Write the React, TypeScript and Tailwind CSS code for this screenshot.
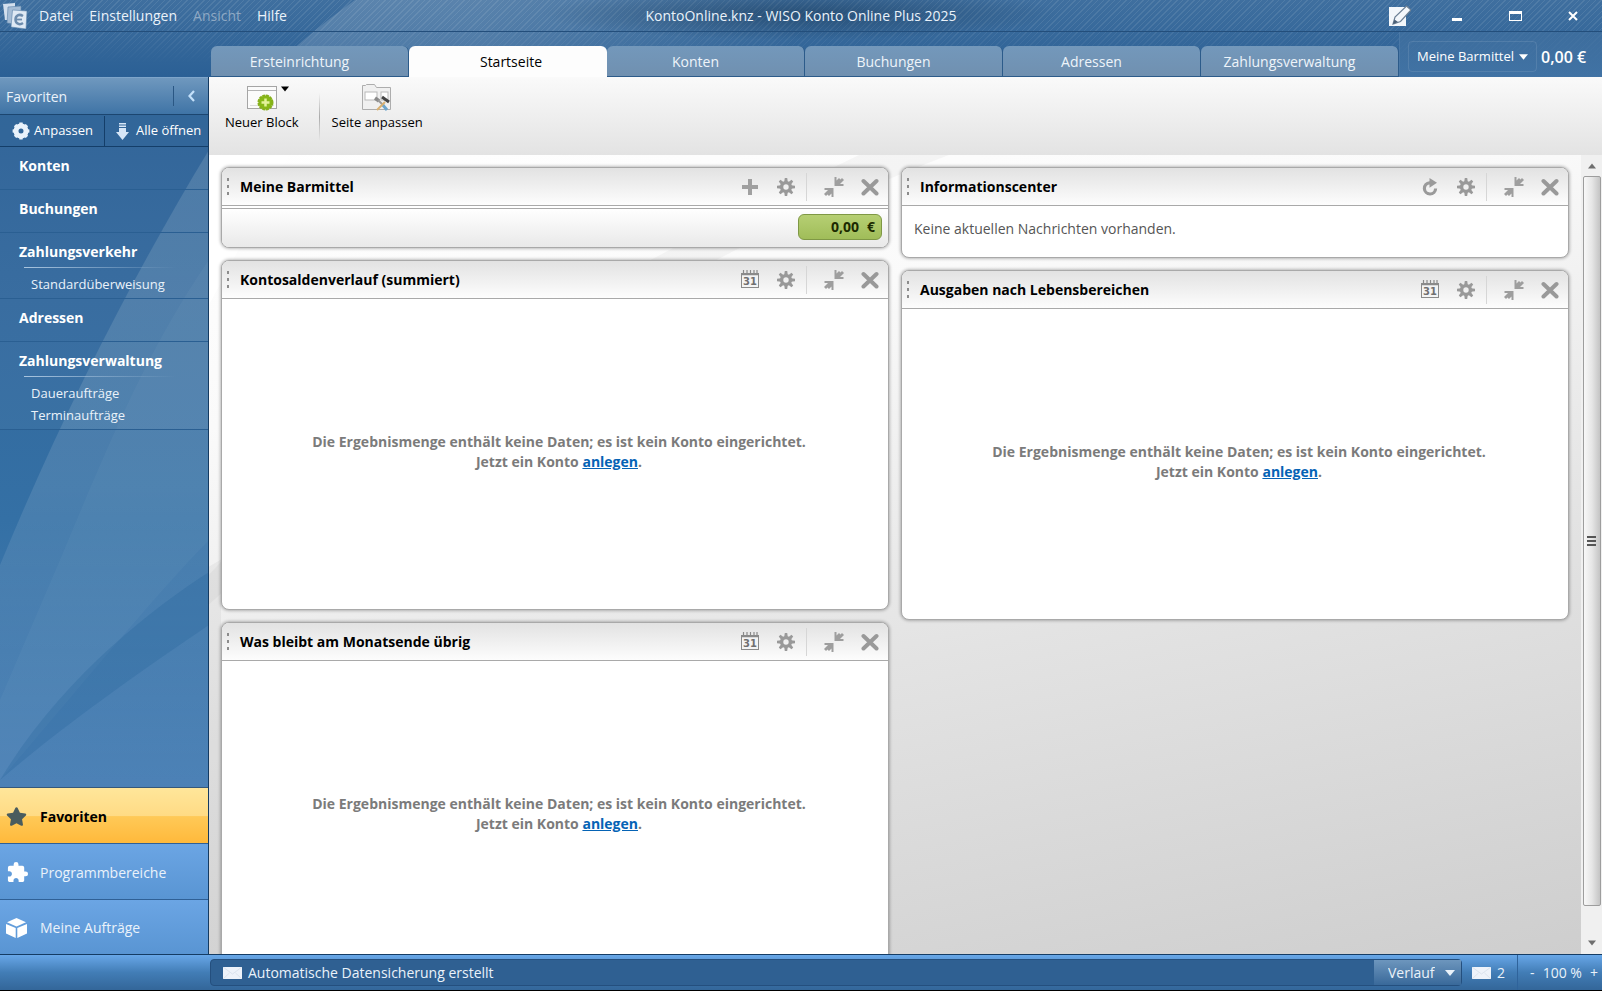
import React from 'react';
import { FaStar } from 'react-icons/fa';
import { MdExtension } from 'react-icons/md';

interface NavGroup {
  title: string;
  items?: string[];
}

const TABS = ['Ersteinrichtung', 'Startseite', 'Konten', 'Buchungen', 'Adressen', 'Zahlungsverwaltung'];
const ACTIVE_TAB = 'Startseite';

const NAV: NavGroup[] = [
  { title: 'Konten' },
  { title: 'Buchungen' },
  { title: 'Zahlungsverkehr', items: ['Standardüberweisung'] },
  { title: 'Adressen' },
  { title: 'Zahlungsverwaltung', items: ['Daueraufträge', 'Terminaufträge'] },
];

const TEETH = [0, 45, 90, 135, 180, 225, 270, 315];

/* ---------- Icons ---------- */

const GearIcon: React.FC<{ className?: string }> = ({ className = '' }) => (
  <svg className={className} width="18" height="18" viewBox="0 0 18 18" fill="none">
    <circle cx="9" cy="9" r="4.4" stroke="currentColor" strokeWidth="3.4" />
    {TEETH.map((a) => (
      <path key={a} d="M7.200 4 L7.800 0 H10.200 L10.800 4 Z" fill="currentColor" transform={`rotate(${a} 9 9)`} />
    ))}
  </svg>
);

const SolidGearIcon = () => (
  <svg width="18" height="18" viewBox="0 0 18 18" fill="none">
    <circle cx="9" cy="9" r="5" stroke="#e9f2fb" strokeWidth="5" />
    {TEETH.map((a) => (
      <path key={a} d="M7 3 L7.4 0.6 H10.6 L11 3 Z" fill="#e9f2fb" transform={`rotate(${a} 9 9)`} />
    ))}
  </svg>
);

const PlusIcon = () => (
  <svg width="18" height="18" viewBox="0 0 18 18">
    <path d="M7 1h4v6h6v4h-6v6H7v-6H1V7h6z" fill="#a0a0a0" />
  </svg>
);

const RefreshIcon = () => (
  <svg width="18" height="18" viewBox="0 0 18 18" fill="none">
    <path d="M10 4.800H8.600a5.600 5.600 0 1 0 6 5.700" stroke="#9a9a9a" strokeWidth="3.200" />
    <path d="M8.500 0l7.500 4.800-7.500 5z" fill="#9a9a9a" />
  </svg>
);

const CalendarIcon = () => (
  <svg width="20" height="20" viewBox="0 0 20 20" fill="none">
    <rect x="1.5" y="3.5" width="17" height="14" fill="#f4f4f4" stroke="#8a8a8a" />
    <path d="M1 4.500h18" stroke="#8a8a8a" strokeWidth="1.500" />
    <path d="M3.5 0v4M7 0v4M10.5 0v4M14 0v4M17 0v4" stroke="#8a8a8a" strokeWidth="1.2" />
    <text x="10" y="15" textAnchor="middle" fontSize="10" fontWeight="700" fontFamily="DejaVu Sans, sans-serif" fill="#707070">31</text>
  </svg>
);

const CollapseIcon = () => (
  <svg width="20" height="20" viewBox="0 0 20 20" fill="#9e9e9e">
    <path d="M10.500 0v9h9V7h-3.500l4-4L18 1l-1.500 1.500L15 1l-2.500 2.500V0z" />
    <path d="M9.500 20v-9h-9v2H4l-4 4L2 19l1.500-1.500L5 19l2.500-2.500V20z" />
  </svg>
);

const CloseIcon = () => (
  <svg width="18" height="18" viewBox="0 0 18 18" fill="none">
    <path d="M2.500 3l13 12.500M15.500 3l-13 12.500" stroke="#999" strokeWidth="4" strokeLinecap="round" />
  </svg>
);

const EnvelopeIcon = () => (
  <svg width="19" height="12" viewBox="0 0 19 12" fill="none">
    <rect width="19" height="12" fill="#eef3fa" />
    <path d="M0 0l9.500 7L19 0M0 12l6.500-6M19 12l-6.500-6" stroke="#d3dce8" strokeWidth="0.700" />
  </svg>
);

const LogoIcon = () => (
  <svg width="26" height="26" viewBox="0 0 26 26" fill="none">
    <path d="M1 1l12-1v17H3z" fill="#d3dfed" />
    <path d="M6 4l13-1v19L5 20z" fill="#a5bcd5" stroke="#5d83aa" strokeWidth="0.600" />
    <path d="M10.500 7L25 8l-1 18-15-2z" fill="#dfe9f4" stroke="#5d83aa" strokeWidth="0.600" />
    <path d="M21 13c-4-2.500-7.500-0.500-7.500 3.500s4 6 7.500 3.500" stroke="#6d8cad" strokeWidth="2.500" />
    <path d="M14 16.500h6" stroke="#6d8cad" strokeWidth="1.800" />
  </svg>
);

const EditIcon = () => (
  <svg width="22" height="22" viewBox="0 0 22 22">
    <path d="M0 2h17v19H0z" fill="#f3f7fb" />
    <path d="M17.500 1L22 5 11.500 16.500 4 19l2-7z" fill="#f3f7fb" stroke="#6b7f94" strokeWidth="1.200" />
    <path d="M4 19l1.500-4.500L9 17z" fill="#4a5f76" />
  </svg>
);

const OpenAllIcon = () => (
  <svg width="13" height="17" viewBox="0 0 13 17" fill="#d6e6f7">
    <path d="M3 0h7v1.500H3zM3 2.500h7V4H3zM3 5h7v4h3l-6.500 8L0 9h3z" />
  </svg>
);

const CubeIcon = () => (
  <svg width="21" height="20" viewBox="0 0 21 20" fill="#fff">
    <path d="M10.500 0L20 4.300 10.500 8.500 1 4.300z" />
    <path d="M0 6l9.700 4v10L0 15.500zM21 6l-9.700 4v10l9.700-4.500z" />
  </svg>
);

const NewBlockIcon = () => (
  <svg width="32" height="28" viewBox="0 0 32 28">
    <rect x="0.500" y="2.500" width="29" height="22" fill="#fbfbfb" stroke="#a5a5a5" />
    <path d="M1 6.500h28" stroke="#b5b5b5" />
    <path d="M3 21.500h24" stroke="#ddd" />
    <circle cx="18.500" cy="18.500" r="7" fill="#86b817" stroke="#86b01c" strokeWidth="2" strokeDasharray="3 0.700" />
    <path d="M18.500 14.500v8M14.500 18.500h8" stroke="#e3f29a" strokeWidth="2.500" />
  </svg>
);

const PageToolsIcon = () => (
  <svg width="32" height="28" viewBox="0 0 32 28" fill="none">
    <path d="M1.500 25.500v-24h3l1-1h8l2 3h14v22z" fill="#f0f0f0" stroke="#adadad" />
    <rect x="4" y="8" width="12" height="8" fill="#fff" stroke="#b9b9b9" />
    <rect x="20" y="8" width="7" height="8" fill="#fff" stroke="#b9b9b9" />
    <path d="M14 14l4 3" stroke="#8a8a8a" strokeWidth="3.500" />
    <path d="M17 16l6 6" stroke="#9a9a9a" strokeWidth="2" />
    <path d="M21 20l5 6" stroke="#6da5cc" strokeWidth="3" />
    <path d="M16 26l8-8" stroke="#d9b070" strokeWidth="2" />
    <path d="M21 13l7 5" stroke="#444" strokeWidth="3" />
  </svg>
);

const Triangle: React.FC<{ className?: string }> = ({ className = '' }) => (
  <svg className={className} width="10" height="6" viewBox="0 0 10 6" fill="currentColor">
    <path d="M0 0h10L5 6z" />
  </svg>
);

/* ---------- Background artwork ---------- */

const Backdrop = () => (
  <svg className="absolute inset-0 h-full w-full" viewBox="0 0 1602 991" preserveAspectRatio="none" fill="none" aria-hidden="true">
    <defs>
      <linearGradient id="beam-top" x1="0" y1="0" x2="1" y2="0">
        <stop offset="0" stopColor="#fff" stopOpacity="0.150" />
        <stop offset="0.400" stopColor="#fff" stopOpacity="0.140" />
        <stop offset="1" stopColor="#fff" stopOpacity="0" />
      </linearGradient>
      <linearGradient id="beam-side" x1="0" y1="0" x2="0" y2="1">
        <stop offset="0" stopColor="#fff" stopOpacity="0.130" />
        <stop offset="0.400" stopColor="#fff" stopOpacity="0.110" />
        <stop offset="0.750" stopColor="#fff" stopOpacity="0.010" />
      </linearGradient>
      <radialGradient id="glow">
        <stop offset="0" stopColor="#14324f" stopOpacity="0.500" />
        <stop offset="1" stopColor="#14324f" stopOpacity="0" />
      </radialGradient>
    </defs>
    <path d="M355 0C320 25 290 50 265 77H800V0z" fill="url(#beam-top)" />
    <path d="M209 150C130 280 60 420 0 565V991H209z" fill="url(#beam-side)" />
    <path d="M209 260C150 345 110 440 60 560L0 700V780C70 700 150 600 209 540z" fill="#fff" fillOpacity="0.030" />
    <path d="M209 572C150 610 60 680 0 780C70 720 150 665 209 625z" fill="#1f5f96" fillOpacity="0.250" />
    <ellipse cx="800" cy="14" rx="260" ry="26" fill="url(#glow)" />
  </svg>
);

const DashboardBackdrop = () => (
  <svg className="absolute inset-0 -z-10 h-full w-full" viewBox="0 0 1372 800" preserveAspectRatio="none" fill="none" aria-hidden="true">
    <path d="M0 420C160 250 400 120 650 0H740C480 100 200 270 0 450z" fill="#000" fillOpacity="0.030" />
    <path d="M0 150L80 0H0z" fill="#fff" />
    <path d="M0 412L12 405V800H0z" fill="#000" fillOpacity="0.040" />
  </svg>
);

/* ---------- Blocks ---------- */

interface BlockProps {
  title: string;
  action: 'plus' | 'refresh' | 'calendar';
  children: React.ReactNode;
}

const ACTIONS = {
  plus: { label: 'Hinzufügen', icon: <PlusIcon /> },
  refresh: { label: 'Aktualisieren', icon: <RefreshIcon /> },
  calendar: { label: 'Zeitraum', icon: <CalendarIcon /> },
};

const IconButton: React.FC<{ label: string; children: React.ReactNode }> = ({ label, children }) => (
  <button type="button" aria-label={label} className="flex h-9 w-9 items-center justify-center">
    {children}
  </button>
);

const Block: React.FC<BlockProps> = ({ title, action, children }) => (
  <section className="overflow-hidden rounded-lg border border-[#a9a9a9] bg-white shadow-[0_0_3px_1px_rgba(0,0,0,0.25)]">
    <header className="flex h-[38px] items-center border-b border-[#a9a9a9] bg-linear-to-b from-[#e2e2e2] to-[#fdfdfd]">
      <span className="ml-[5px] flex flex-col gap-1" aria-hidden="true">
        <span className="h-[3px] w-[2px] bg-[#8c8c8c]" />
        <span className="h-[3px] w-[2px] bg-[#8c8c8c]" />
        <span className="h-[3px] w-[2px] bg-[#8c8c8c]" />
      </span>
      <h2 className="ml-[11px] flex-1 text-sm font-bold text-black">{title}</h2>
      <IconButton label={ACTIONS[action].label}>{ACTIONS[action].icon}</IconButton>
      <IconButton label="Einstellungen"><GearIcon className="text-[#999]" /></IconButton>
      <span className="mr-[9px] ml-0.5 h-7 w-px bg-[#d6d6d6]" />
      <IconButton label="Verkleinern"><CollapseIcon /></IconButton>
      <IconButton label="Schließen"><CloseIcon /></IconButton>
    </header>
    {children}
  </section>
);

const EmptyResult = () => (
  <div className="flex h-[310px] items-center justify-center pb-1 pl-2 text-center text-sm leading-5 font-bold text-[#7b7b7b]">
    <p>
      Die Ergebnismenge enthält keine Daten; es ist kein Konto eingerichtet.
      <br />
      Jetzt ein Konto <a href="#anlegen" className="text-[#0563b5] underline">anlegen</a>.
    </p>
  </div>
);

/* ---------- Page parts ---------- */

const TitleBar = () => (
  <header className="flex h-8 items-center border-b border-[#234e7b] text-sm text-[#eaf2fa]">
    <nav className="flex flex-1 items-center">
      <span className="mr-[11px] ml-0.5"><LogoIcon /></span>
      <button type="button" className="mr-4">Datei</button>
      <button type="button" className="mr-4">Einstellungen</button>
      <button type="button" className="mr-4 text-[#8fa9c4]">Ansicht</button>
      <button type="button">Hilfe</button>
    </nav>
    <h1>KontoOnline.knz - WISO Konto Online Plus 2025</h1>
    <div className="flex flex-1 items-center justify-end">
      <button type="button" aria-label="Notiz" className="mr-1 flex w-12 justify-center"><EditIcon /></button>
      <button type="button" aria-label="Minimieren" className="flex w-[58px] justify-center pt-2">
        <span className="h-[3px] w-[10px] bg-white" />
      </button>
      <button type="button" aria-label="Maximieren" className="flex w-[58px] justify-center">
        <span className="h-[10px] w-[13px] border border-t-[3px] border-white" />
      </button>
      <button type="button" aria-label="Schließen" className="flex w-[58px] justify-center">
        <svg width="10" height="10" viewBox="0 0 10 10"><path d="M1 1l8 8M9 1l-8 8" stroke="#fff" strokeWidth="2" /></svg>
      </button>
    </div>
  </header>
);

const TabStrip = () => (
  <div className="flex h-[45px] pl-[211px]">
    <div role="tablist" className="grid flex-1 grid-cols-6 items-end">
      {TABS.map((tab) => (
        <button
          key={tab}
          type="button"
          role="tab"
          aria-selected={tab === ACTIVE_TAB}
          className={
            tab === ACTIVE_TAB
              ? 'h-[31px] rounded-t-md bg-[#fdfdfd] pl-1.5 text-sm text-black'
              : 'h-[31px] rounded-t-md border-r border-b border-[#2c5b8a] bg-linear-to-b from-[#7398bb] to-[#7090b0] pt-0.5 pr-5 text-sm text-[#eef4fa]'
          }
        >
          {tab}
        </button>
      ))}
    </div>
    <div className="flex w-[203px] items-center border-l border-[#4a78a6] bg-linear-to-b from-[#41709f]/60 to-[#4f7fae]/60 pt-1 pl-2 text-white">
      <label className="flex h-[31px] items-center rounded border border-white/10 px-2">
        <select aria-label="Kontogruppe" className="appearance-none bg-transparent text-[13px]">
          <option>Meine Barmittel</option>
        </select>
        <Triangle className="ml-1 w-[9px]" />
      </label>
      <span className="ml-1 text-base font-semibold whitespace-nowrap">0,00 €</span>
    </div>
  </div>
);

const Sidebar = () => (
  <aside className="flex w-[209px] shrink-0 flex-col border-r border-[#143a61] text-[#eaf2fa]">
    <div className="flex h-[38px] items-center border-t border-b border-t-[#7ea5ca] border-b-[#1c4670] bg-linear-to-b from-[#6f98be] to-[#3f74a6] pl-1.5 text-sm">
      <h2 className="flex-1 pt-0.5">Favoriten</h2>
      <span className="h-5 w-px bg-[#2a5784]" />
      <button type="button" aria-label="Einklappen" className="flex h-full w-[34px] items-center justify-center">
        <svg width="7" height="12" viewBox="0 0 7 12" fill="none"><path d="M6 1L1.500 6 6 11" stroke="#c3e0fa" strokeWidth="2.200" /></svg>
      </button>
    </div>
    <div className="flex h-8 border-b border-[#143e69] bg-[#35699b]/60 pt-px text-[13px] font-medium text-white">
      <button type="button" className="flex w-[105px] items-center gap-1 border-r border-[#143e69] pl-3">
        <SolidGearIcon />
        Anpassen
      </button>
      <button type="button" className="flex flex-1 items-center gap-[7px] pl-[11px] whitespace-nowrap">
        <OpenAllIcon />
        Alle öffnen
      </button>
    </div>
    <nav className="bg-white/[0.030]">
      {NAV.map((group) => (
        <div key={group.title} className="border-b border-[#2a5f92]">
          <h3 className={group.items ? 'pt-[7px] pb-[3px] pl-[19px] text-sm leading-6 font-bold text-white' : 'pt-[7px] pb-[11px] pl-[19px] text-sm leading-6 font-bold text-white'}>
            {group.title}
          </h3>
          {group.items && (
            <>
              <div className="mr-8 ml-6 h-px bg-linear-to-r from-[#a9c5df] to-transparent" />
              <ul className="pt-[5px] pb-[3px] pl-[31px] text-[13px]">
                {group.items.map((item) => (
                  <li key={item} className="leading-[22px]"><a href="#bereich">{item}</a></li>
                ))}
              </ul>
            </>
          )}
        </div>
      ))}
    </nav>
    <div className="flex-1" />
    <div className="text-sm">
      <button type="button" className="flex h-14 w-full items-center border-t border-[#35587a] bg-[linear-gradient(180deg,#ffe69a_0%,#ffdb85_50%,#ffc957_52%,#ffb93b_100%)] pt-0.5 pl-1.5 font-bold text-black">
        <FaStar size={21} className="mr-[13px] text-[#4a5c5e]" />
        Favoriten
      </button>
      <button type="button" className="flex h-14 w-full items-center border-t border-[#2f6096] bg-linear-to-b from-[#6ba5e4] to-[#5995d3] pt-0.5 pl-1.5">
        <MdExtension size={23} className="mr-[11px] text-white" />
        Programmbereiche
      </button>
      <button type="button" className="flex h-[55px] w-full items-center border-t border-[#2f6096] bg-linear-to-b from-[#6ba5e4] to-[#5995d3] pt-0.5 pl-1.5">
        <span className="mr-[13px]"><CubeIcon /></span>
        Meine Aufträge
      </button>
    </div>
  </aside>
);

const Toolbar = () => (
  <div className="flex h-[78px] items-start bg-linear-to-b from-[#fafafa] to-[#e3e3e3] text-[13px] text-black">
    <button type="button" className="mt-[7px] ml-4 flex flex-col items-center">
      <span className="flex pl-3">
        <NewBlockIcon />
        <Triangle className="mt-0.5 ml-0.5 w-[8px]" />
      </span>
      <span className="leading-5">Neuer Block</span>
    </button>
    <span className="mx-3 mt-4 ml-5 h-12 w-px bg-linear-to-b from-transparent via-[#aaa] to-transparent" />
    <button type="button" className="mt-[7px] flex flex-col items-center">
      <PageToolsIcon />
      <span className="leading-5">Seite anpassen</span>
    </button>
  </div>
);

const ScrollBar = () => (
  <div className="flex w-[21px] shrink-0 flex-col items-center bg-[#f0f0f0]" aria-hidden="true">
    <div className="flex h-[21px] items-center text-[#6e6e6e]"><Triangle className="w-2 rotate-180" /></div>
    <div className="flex w-[18px] flex-1 flex-col items-center justify-center gap-0.5 rounded-xs border border-[#9d9d9d] bg-linear-to-r from-[#f8f8f8] via-[#e6e6e6] to-[#c4c4c4]">
      <span className="h-[2px] w-[9px] bg-[#555]" />
      <span className="h-[2px] w-[9px] bg-[#555]" />
      <span className="h-[2px] w-[9px] bg-[#555]" />
    </div>
    <div className="flex h-12 items-end pb-2 text-[#6e6e6e]"><Triangle className="w-2" /></div>
  </div>
);

const Dashboard = () => (
  <div className="flex min-h-0 flex-1">
    <div className="relative isolate grid min-w-0 flex-1 grid-cols-2 items-start gap-3 overflow-hidden bg-[linear-gradient(168deg,#ffffff_0%,#fafafa_25%,#e3e3e3_60%,#cecece_100%)] p-3">
      <DashboardBackdrop />
      <div className="flex flex-col gap-3">
        <Block title="Meine Barmittel" action="plus">
          <div className="mt-0.5 flex h-[39px] items-start justify-end border-t border-[#a9a9a9] bg-linear-to-b from-white to-[#e9e9e9] pt-[5px] pr-1.5">
            <span className="flex h-[26px] w-[84px] items-center justify-end gap-2 rounded-md border border-[#7f9845] bg-linear-to-b from-[#b6cf73] to-[#a0bd59] pr-1.5 text-sm font-bold text-[#1c2a00]">
              <span>0,00</span>
              <span>€</span>
            </span>
          </div>
        </Block>
        <Block title="Kontosaldenverlauf (summiert)" action="calendar">
          <EmptyResult />
        </Block>
        <Block title="Was bleibt am Monatsende übrig" action="calendar">
          <EmptyResult />
        </Block>
      </div>
      <div className="flex flex-col gap-3">
        <Block title="Informationscenter" action="refresh">
          <p className="h-[51px] pt-[13px] pl-3 text-sm text-[#555]">Keine aktuellen Nachrichten vorhanden.</p>
        </Block>
        <Block title="Ausgaben nach Lebensbereichen" action="calendar">
          <EmptyResult />
        </Block>
      </div>
    </div>
    <ScrollBar />
  </div>
);

const StatusBar = () => (
  <footer className="flex h-[37px] shrink-0 items-center border-t border-b border-t-[#153c64] border-b-black bg-linear-to-b from-[#68a7e8] via-[#427db6] to-[#336699] pl-[210px] text-sm text-[#eaf2fa]">
    <div className="flex h-[27px] flex-1 items-center rounded border border-[#244f7e] bg-[#2f6092] pl-3">
      <EnvelopeIcon />
      <span className="ml-1.5 flex-1">Automatische Datensicherung erstellt</span>
      <label className="flex h-full items-center bg-linear-to-b from-[#6d96bd] to-[#39699a] pr-1.5 pl-3.5">
        <select aria-label="Verlauf" className="appearance-none bg-transparent">
          <option>Verlauf</option>
        </select>
        <Triangle className="ml-2.5" />
      </label>
    </div>
    <div className="flex h-full w-14 items-center gap-1.5 border-r border-[#2f639b] pl-2.5">
      <EnvelopeIcon />
      2
    </div>
    <div className="flex w-[84px] items-center justify-between pr-1 pl-3 whitespace-nowrap">
      <button type="button" aria-label="Verkleinern">-</button>
      <span>100 %</span>
      <button type="button" aria-label="Vergrößern">+</button>
    </div>
  </footer>
);

export default function App() {
  return (
    <div className="relative isolate flex h-screen flex-col overflow-hidden bg-[linear-gradient(180deg,#3f6f9f_0px,#2b6095_77px,#33699d_300px,#3470a5_520px,#4a80b5_780px)] font-['Open_Sans','Noto_Sans',sans-serif]">
      <div className="absolute inset-0 -z-10">
        <div className="h-16 bg-[repeating-linear-gradient(135deg,rgba(255,255,255,0.09)_0px,rgba(255,255,255,0.09)_1px,transparent_1px,transparent_4px)] mask-b-from-40%" />
        <Backdrop />
      </div>
      <TitleBar />
      <TabStrip />
      <div className="flex min-h-0 flex-1">
        <Sidebar />
        <main className="flex min-w-0 flex-1 flex-col bg-white">
          <Toolbar />
          <Dashboard />
        </main>
      </div>
      <StatusBar />
    </div>
  );
}
